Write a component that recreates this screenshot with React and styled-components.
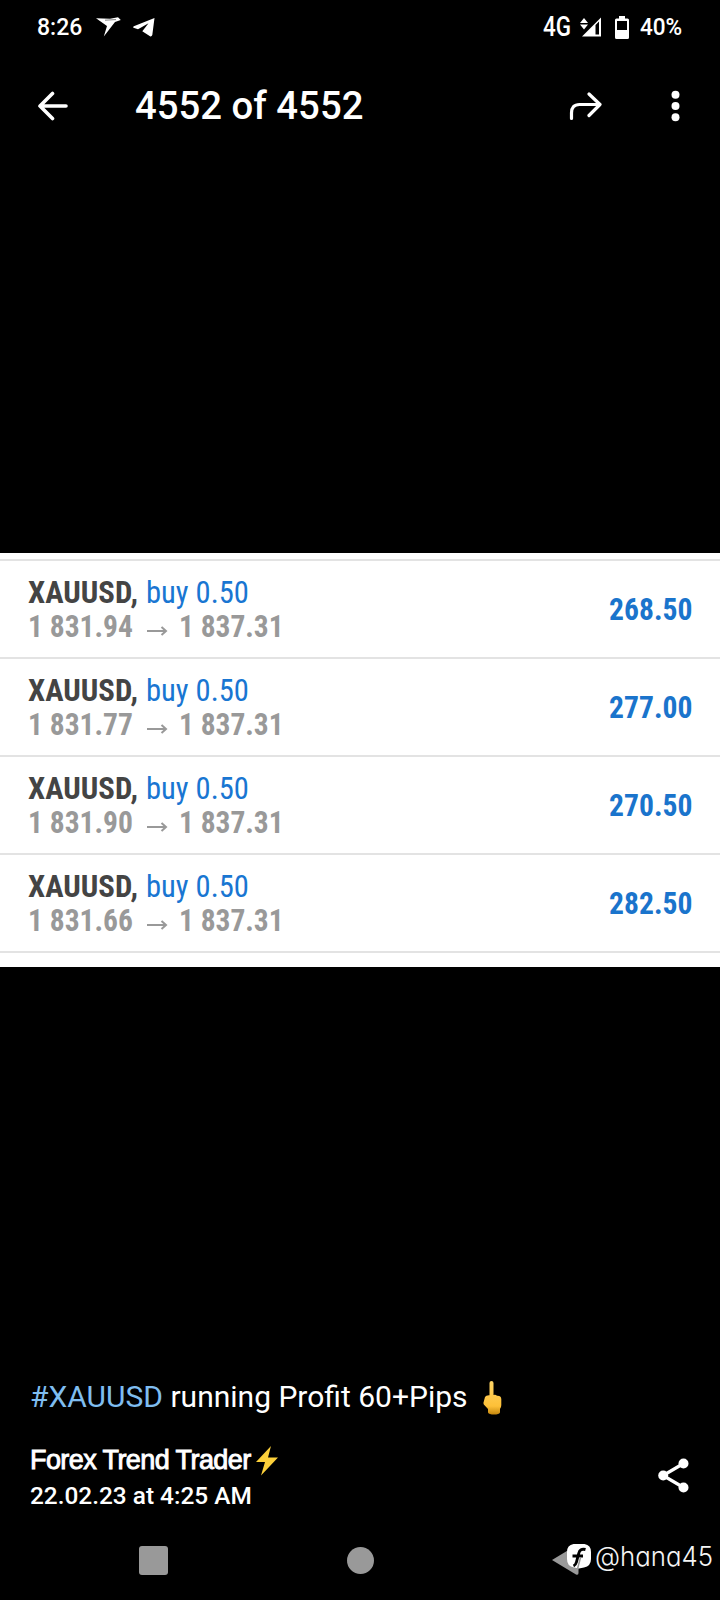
import React from 'react';
import styled, { createGlobalStyle } from 'styled-components';

const trades = [
  { open: '1 831.94', close: '1 837.31', profit: '268.50' },
  { open: '1 831.77', close: '1 837.31', profit: '277.00' },
  { open: '1 831.90', close: '1 837.31', profit: '270.50' },
  { open: '1 831.66', close: '1 837.31', profit: '282.50' },
];

const GlobalStyle = createGlobalStyle`
  body {
    margin: 0;
    background: #000;
  }
`;

const Screen = styled.div`
  display: flex;
  flex-direction: column;
  width: 720px;
  height: 1600px;
  overflow: hidden;
  background: #000;
  color: #fff;
  font-family: Roboto, 'Liberation Sans', sans-serif;
`;

// Text squeezed into a slot of a known width
const Squeeze = styled.span`
  display: inline-block;
  flex: none;
  width: ${(p) => p.$width}px;
  white-space: pre;
  transform: scaleX(${(p) => p.$scale || 1});
  transform-origin: left;
`;

const StatusBar = styled.div`
  display: flex;
  align-items: center;
  justify-content: space-between;
  box-sizing: border-box;
  height: 54px;
  padding: 0 37px;
  font-size: 23px;
  font-weight: 500;
`;

const StatusGroup = styled.div`
  display: flex;
  align-items: center;
`;

const Icon = styled.svg`
  display: block;
  flex: none;
  margin-top: ${(p) => p.$top || 0}px;
  margin-left: ${(p) => p.$left || 0}px;
`;

const Network = styled(Squeeze)`
  font-size: 27px;
`;

const Battery = styled(Squeeze)`
  margin-left: 11px;
`;

const Header = styled.header`
  display: flex;
  align-items: center;
  height: 103px;
  padding: 0 40px 0 38px;
`;

const Title = styled.h1`
  flex: 1;
  margin: 0 0 0 66px;
  font-size: 38.3px;
  font-weight: 500;
  line-height: 43px;
  padding-bottom: 1px;
`;

const Photo = styled.main`
  box-sizing: border-box;
  height: 414px;
  margin-top: 396px;
  padding-top: 6px;
  background: #fff;
`;

const TradeList = styled.div`
  border-top: 2px solid #e3e3e3;
`;

const Trade = styled.div`
  display: flex;
  justify-content: space-between;
  box-sizing: border-box;
  height: 98px;
  padding: 14px 28px 0;
  border-bottom: 2px solid #e3e3e3;
  font-family: 'Roboto Condensed', Roboto, sans-serif;
  font-stretch: 75%;
  font-size: 32px;
  font-weight: 700;
  line-height: 34px;
`;

const Line = styled.div`
  display: flex;
  height: 34px;
  color: ${(p) => p.$color};
`;

const Side = styled(Squeeze)`
  color: #1976d2;
  font-weight: 400;
`;

const Profit = styled(Squeeze)`
  margin-top: 17px;
  color: #1a74cc;
`;

const Footer = styled.footer`
  display: flex;
  justify-content: space-between;
  margin-top: 412px;
  padding: 0 31px 0 30px;
`;

const Caption = styled.div`
  display: flex;
  height: 36px;
  font-size: 30px;
  line-height: 36px;
`;

const Hashtag = styled.span`
  color: #7fbdf0;
`;

const Author = styled.div`
  display: flex;
  height: 36px;
  margin-top: 28px;
  font-family: 'Liberation Sans', sans-serif;
  font-size: 27px;
  letter-spacing: -0.58px;
  line-height: 34px;
  -webkit-text-stroke: 0.9px #fff;
`;

const Bolt = styled.svg`
  display: block;
  margin: 3px 0 0 6px;
`;

const PostDate = styled.div`
  height: 32px;
  font-size: 24.4px;
  font-weight: 500;
  line-height: 33px;
`;

const NavBar = styled.nav`
  position: relative;
  display: flex;
  align-items: center;
  height: 80px;
  margin-top: 9px;
`;

const Watermark = styled.div`
  position: absolute;
  top: 20px;
  left: 566px;
  display: flex;
  color: #f4f4f4;
  font-family: Inter, sans-serif;
  font-feature-settings: 'cv11';
  font-size: 27px;
  font-weight: 350;
  line-height: 34px;
`;

const Handle = styled(Squeeze)`
  margin-left: 3px;
`;

function PlaneIcon() {
  return (
    <Icon $left={14} width="25" height="20" viewBox="0 0 25 20" fill="#fff">
      <path d="M0 1.2 14 1.7 22 .3 24.8 3 19 5 7.8 19.5 11 9Z" />
      <path d="M9 3.2 20 2.6" stroke="#000" strokeWidth=".5" />
    </Icon>
  );
}

function TelegramIcon() {
  return (
    <Icon $left={12} width="22" height="19" viewBox="0 0 22 19" fill="#fff">
      <path d="M21.500 0 19.300 17Q18.500 19 17 18.300L9.300 13.300 15.500 5.300 5 11.300 .5 9.800Q-.3 9 .8 8.300Z" />
    </Icon>
  );
}

function SignalIcon() {
  return (
    <Icon $left={10} width="21" height="20" viewBox="0 0 21 20" fill="#fff">
      <path d="M0 6 4 1 8 6ZM0 7.5h8L4 12.5Z" />
      <path fillRule="evenodd" d="M2 19.5 21 .5v19ZM15.5 8v9.5h3.5V4.5Z" />
    </Icon>
  );
}

function BatteryIcon() {
  return (
    <Icon $left={14} width="14" height="23" viewBox="0 0 14 23" fill="#fff">
      <path
        fillRule="evenodd"
        d="M4 0h6v2.5h2.5q1.5 0 1.5 1.5v17.5q0 1.5-1.5 1.5h-11Q0 23 0 21.5V4q0-1.5 1.5-1.5H4ZM2 5v9h10V5Z"
      />
    </Icon>
  );
}

function FingerEmoji() {
  return (
    <Icon $top={2} $left={15} width="19" height="34" viewBox="0 0 19 34">
      <defs>
        <linearGradient id="skin" x1="0" y1="0" x2="0" y2="1">
          <stop offset="0" stopColor="#ffd566" />
          <stop offset=".75" stopColor="#fdc038" />
          <stop offset="1" stopColor="#c4860d" />
        </linearGradient>
      </defs>
      <path
        fill="url(#skin)"
        d="M6.5 2q0-2 2-2t2 2v12q2-1 3.5.8 4-.3 4.300 3.200V24q0 2.500-1.300 4v3.500q-1 2-6 2t-6-2V28L.8 23.500Q0 22 .8 20.500L2 16q1-2 4.500-1.800Z"
      />
    </Icon>
  );
}

function App() {
  return (
    <>
      <GlobalStyle />
      <Screen>
        <StatusBar>
          <StatusGroup>
            <Squeeze $width={45}>8:26</Squeeze>
            <PlaneIcon />
            <TelegramIcon />
          </StatusGroup>
          <StatusGroup>
            <Network $width={27} $scale={0.83}>4G</Network>
            <SignalIcon />
            <BatteryIcon />
            <Battery $width={43} $scale={0.98}>40%</Battery>
          </StatusGroup>
        </StatusBar>

        <Header>
          <Icon width="31" height="30" viewBox="0 0 31 30" fill="none" stroke="#fff" strokeWidth="3.6" strokeLinecap="round" strokeLinejoin="round">
            <path d="M28 15H2M14.5 2.5 2 15 14.5 27.5" />
          </Icon>
          <Title>4552 of 4552</Title>
          <Icon width="33" height="30" viewBox="0 0 33 30" fill="none" stroke="#fff" strokeWidth="3.2" strokeLinecap="round" strokeLinejoin="round">
            <path d="M2.5 27.5V22Q2.5 13.5 10.5 13.5H30.5M20 3 31 13.500 20 24.500" />
          </Icon>
          <Icon $left={68} width="10" height="32" viewBox="0 0 10 32" fill="#fff">
            <circle cx="5.5" cy="4.800" r="4" />
            <circle cx="5.5" cy="16" r="4" />
            <circle cx="5.5" cy="27.2" r="4" />
          </Icon>
        </Header>

        <Photo>
          <TradeList>
            {trades.map((trade) => (
              <Trade key={trade.open}>
                <div>
                  <Line $color="#444">
                    <Squeeze $width={118} $scale={0.96}>XAUUSD,</Squeeze>
                    <Side $width={104} $scale={0.955}>buy 0.50</Side>
                  </Line>
                  <Line $color="#999">
                    <Squeeze $width={118} $scale={0.923}>{trade.open}</Squeeze>
                    <Icon width="33" height="34" viewBox="0 0 33 34" fill="none" stroke="#999" strokeWidth="2">
                      <path d="M1 22H20M15.5 18 20 22 15.5 26" />
                    </Icon>
                    <Squeeze $width={104} $scale={0.92}>{trade.close}</Squeeze>
                  </Line>
                </div>
                <Profit $width={83} $scale={0.925}>{trade.profit}</Profit>
              </Trade>
            ))}
          </TradeList>
        </Photo>

        <Footer>
          <div>
            <Caption>
              <span>
                <Hashtag>#XAUUSD</Hashtag> running Profit 60+Pips
              </span>
              <FingerEmoji />
            </Caption>
            <Author>
              <Squeeze $width={220}>Forex Trend Trader</Squeeze>
              <Bolt width="22" height="30" viewBox="0 0 22 30" fill="#fcd03a">
                <path d="M15 0 0 16H9L5 29.5 22 11.5H12Z" />
              </Bolt>
            </Author>
            <PostDate>22.02.23 at 4:25 AM</PostDate>
          </div>
          <Icon $top={79} width="31" height="36" viewBox="0 0 31 36" fill="#fff">
            <path d="M25.5 5.5 5 17.5 25.5 29.5" fill="none" stroke="#fff" strokeWidth="3.2" />
            <circle cx="25.5" cy="5.5" r="5" />
            <circle cx="5.2" cy="17.5" r="5" />
            <circle cx="25.5" cy="29.5" r="5" />
          </Icon>
        </Footer>

        <NavBar>
          <Icon $left={139} width="29" height="29">
            <rect width="29" height="29" rx="3" fill="#999" />
          </Icon>
          <Icon $left={179} width="27" height="27">
            <circle cx="13.5" cy="13.5" r="13.5" fill="#999" />
          </Icon>
          <Icon $left={178} width="27" height="32">
            <path d="M0 16 24 1.5Q26.5 1 26.5 3V29Q26.5 31.5 24 30.5Z" fill="#999" />
          </Icon>
          <Watermark>
            <Icon $top={2} width="26" height="34" viewBox="0 0 26 34">
              <path d="M7.5 2h11q6.5 1 6.5 8v7q0 7-7 8.500l-5 1L8 25.500q-7-1-7-8.500v-7Q1 3 7.500 2Z" fill="#fff" />
              <path d="M19.5 7.5q-5.5-1.5-6.800 4L10.500 20q-.8 3-3 4M6.500 14H17" stroke="#000" strokeWidth="2.9" fill="none" />
              <path d="M14.5 15.5 11.5 27" stroke="#999" strokeWidth="1.5" />
            </Icon>
            <Handle $width={118} $scale={0.955}>@hana45</Handle>
          </Watermark>
        </NavBar>
      </Screen>
    </>
  );
}

export default App;
